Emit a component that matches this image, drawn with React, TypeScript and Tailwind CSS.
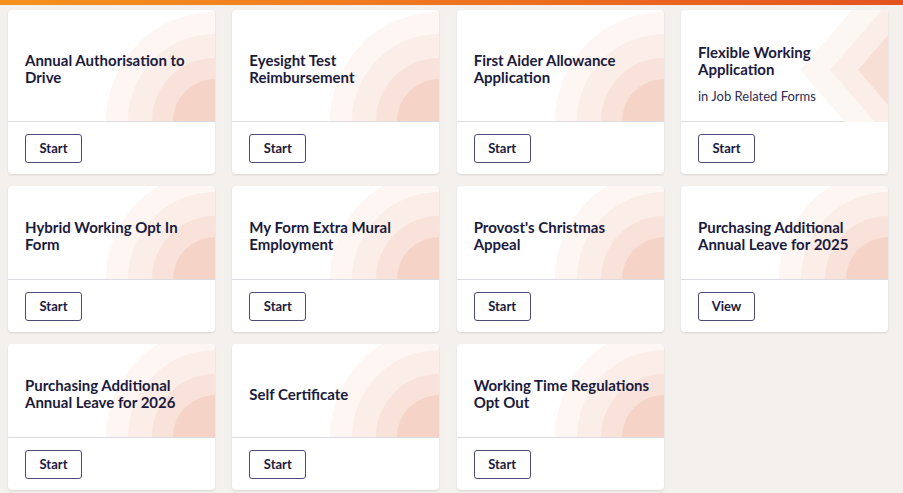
import React from 'react';

interface FormCard {
    title: string;
    subtitle?: string;
    action: string;
    pattern: 'rings' | 'chevrons';
}

const forms: FormCard[] = [
    { title: 'Annual Authorisation to Drive', action: 'Start', pattern: 'rings' },
    { title: 'Eyesight Test Reimbursement', action: 'Start', pattern: 'rings' },
    { title: 'First Aider Allowance Application', action: 'Start', pattern: 'rings' },
    { title: 'Flexible Working Application', subtitle: 'in Job Related Forms', action: 'Start', pattern: 'chevrons' },
    { title: 'Hybrid Working Opt In Form', action: 'Start', pattern: 'rings' },
    { title: 'My Form Extra Mural Employment', action: 'Start', pattern: 'rings' },
    { title: "Provost's Christmas Appeal", action: 'Start', pattern: 'rings' },
    { title: 'Purchasing Additional Annual Leave for 2025', action: 'View', pattern: 'rings' },
    { title: 'Purchasing Additional Annual Leave for 2026', action: 'Start', pattern: 'rings' },
    { title: 'Self Certificate', action: 'Start', pattern: 'rings' },
    { title: 'Working Time Regulations Opt Out', action: 'Start', pattern: 'rings' },
];

function Rings() {
    return (
        <svg className="absolute right-0 bottom-0 pointer-events-none" width="110" height="110" viewBox="0 0 110 110">
            <circle cx="110" cy="110" r="109" fill="#fdf6f3" />
            <circle cx="110" cy="110" r="87" fill="#fbede7" />
            <circle cx="110" cy="110" r="63" fill="#f9e2d9" />
            <circle cx="110" cy="110" r="42" fill="#f5d4c7" />
        </svg>
    );
}

function Chevrons() {
    // header is 112px tall, apex sits a little above the middle
    return (
        <svg className="absolute right-0 top-0 pointer-events-none" width="90" height="112" viewBox="0 0 90 112">
            <polygon points="2,60 54,0 90,0 90,112 47,112" fill="#fdf7f4" />
            <polygon points="32,60 84,0 90,0 90,112 77,112" fill="#fbede7" />
            <polygon points="60,60 90,25 90,95" fill="#f8dfd5" />
        </svg>
    );
}

function Card({ form }: { form: FormCard }) {
    const head = form.subtitle ? 'pt-[34px] pb-[16px]' : 'min-h-[94px] pt-[7px]';
    return (
        <div className="flex flex-col bg-white rounded-[4px] shadow-[0_1px_2px_rgba(0,0,0,0.12)] overflow-hidden">
            <div className={`relative flex-1 flex flex-col justify-center pl-[17px] pr-[14px] border-b border-[#dcdbe3] ${head}`}>
                {form.pattern === 'rings' ? <Rings /> : <Chevrons />}
                <h3 className="relative text-[15px] leading-[17px] font-bold text-[#1b1a3d]">{form.title}</h3>
                {form.subtitle && (
                    <p className="relative mt-[10px] text-[13px] leading-[17px] text-[#2e2d4f]">{form.subtitle}</p>
                )}
            </div>
            <div className="px-[17px] pt-[12px] pb-[11px]">
                <button className="w-[57px] h-[29px] rounded-[3px] border border-[#4c4b78] text-[13px] font-bold text-[#1b1a3d]">
                    {form.action}
                </button>
            </div>
        </div>
    );
}

export default function App() {
    return (
        <div className="min-h-[493px] bg-[#f3f0ed] font-['Lato','Noto_Sans',sans-serif]">
            <div className="h-[5px] bg-gradient-to-r from-[#f7921e] to-[#e4531f]" />
            <div className="grid grid-cols-4 gap-x-[17.33px] gap-y-[12px] pl-[8px] pr-[15px] pt-[5px]">
                {forms.map((form) => (
                    <Card key={form.title} form={form} />
                ))}
            </div>
        </div>
    );
}
